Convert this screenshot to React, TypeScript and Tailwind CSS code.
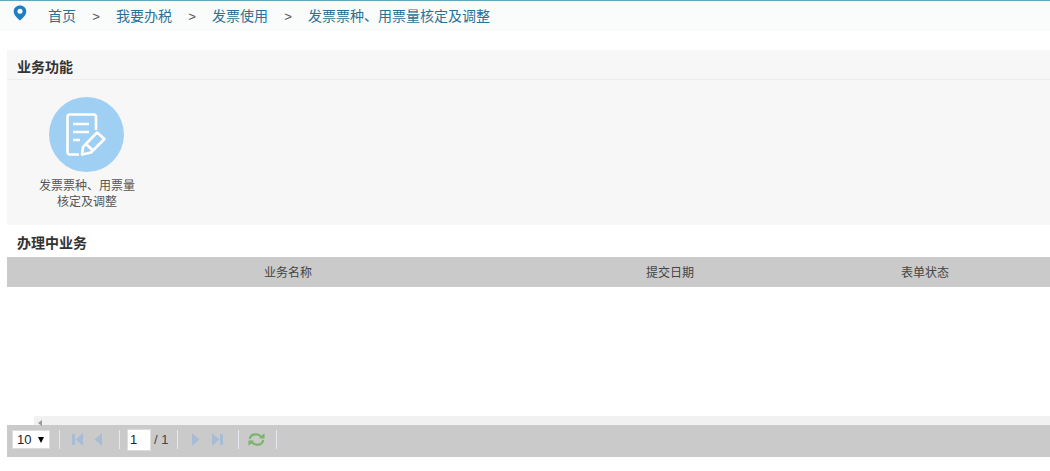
const FONT = "font-['Liberation_Sans','Noto_Sans_CJK_SC',sans-serif]"

const CRUMBS = ["首页", "我要办税", "发票使用", "发票票种、用票量核定及调整"]

// 分页栏的竖线
const Sep = () => <div className="w-px h-[19px] bg-[#e6eaf0] shrink-0" />

const PinIcon = () => (
  <svg width="14" height="16" viewBox="0 0 14 16" className="block">
    <path d="M7 0.5C3.4 0.5 0.7 3.1 0.7 6.4C0.7 10 4.6 13.4 7 15.5C9.4 13.4 13.3 10 13.3 6.4C13.3 3.1 10.6 0.5 7 0.5Z" fill="#1f7fc4" />
    <circle cx="7" cy="6.2" r="2.5" fill="#fff" />
  </svg>
)

const FormIcon = () => (
  <svg width="41" height="44" viewBox="0 0 41 44" fill="none" stroke="#fff" strokeWidth="2.6" strokeLinejoin="round">
    <path d="M13 41.500H3.500C2.500 41.500 1.500 40.500 1.500 39.500V3.500C1.500 2.500 2.500 1.500 3.500 1.500H28C29 1.500 30 2.500 30 3.500V17" />
    <path d="M7 11H23M7 19H23M7 27H14" />
    <path d="M16 41.500L17 34L31 19.500L38.500 26L25 39.500L16 41.500Z" />
    <path d="M20 31L27.500 38" />
  </svg>
)

const FirstIcon = () => (
  <svg width="11" height="13" viewBox="0 0 11 13">
    <rect x="0" y="1" width="3" height="11" fill="#a9bcd6" />
    <path d="M11 0V13L3.500 6.500Z" fill="#a9bcd6" />
  </svg>
)
const PrevIcon = () => (
  <svg width="8" height="13" viewBox="0 0 8 13"><path d="M8 0V13L0.500 6.500Z" fill="#a9bcd6" /></svg>
)
const NextIcon = () => (
  <svg width="8" height="13" viewBox="0 0 8 13"><path d="M0 0V13L7.500 6.500Z" fill="#a9bcd6" /></svg>
)
const LastIcon = () => (
  <svg width="11" height="13" viewBox="0 0 11 13">
    <path d="M0 0V13L7.500 6.500Z" fill="#a9bcd6" />
    <rect x="8" y="1" width="3" height="11" fill="#a9bcd6" />
  </svg>
)
const RefreshIcon = () => (
  <svg width="17" height="15" viewBox="0 0 17 15" fill="none" stroke="#79b568" strokeWidth="2.2" strokeLinecap="round">
    <path d="M2 6C3 3 6 2 9 2.500C11 2.800 12 3.500 13 4.500" />
    <path d="M15 9C14 12 11 13 8 12.500C6 12.200 5 11.500 4 10.500" />
    <path d="M11 6.500H16.500V1Z" fill="#79b568" stroke="none" />
    <path d="M6 8.500H0.500V14Z" fill="#79b568" stroke="none" />
  </svg>
)

export default function App() {
  return (
    <div className={`${FONT} w-[1050px] h-[471px] bg-white overflow-hidden`}>
      {/* 面包屑 */}
      <div className="h-[31px] bg-[#fafbfb] border-t border-t-[#5fa9bd] flex items-center pl-[13px] pt-[1px]">
        <div className="w-[35px] -mt-[8px]"><PinIcon /></div>
        {CRUMBS.map((c, i) => (
          <div key={c} className="flex items-center">
            {i > 0 && <span className="w-[40px] text-center text-[13px] text-[#555]">&gt;</span>}
            <span className="text-[14px] text-[#2a7295]">{c}</span>
          </div>
        ))}
      </div>

      {/* 业务功能 */}
      <div className="mt-[19px] ml-[7px] h-[175px] bg-[#f7f7f7]">
        <div className="h-[30px] border-b border-[#ececec] pl-[10px] pt-[7px] text-[14px] leading-[20px] font-bold text-[#333]">业务功能</div>
        <div className="w-[159px] flex flex-col items-center pt-[17px]">
          <div className="w-[75px] h-[75px] rounded-full bg-[#9fd0f3] flex items-center justify-center">
            <FormIcon />
          </div>
          <div className="mt-[6px] pl-[1px] text-[12px] leading-[16px] text-[#555] text-center">
            发票票种、用票量<br />核定及调整
          </div>
        </div>
      </div>

      {/* 办理中业务 */}
      <div className="ml-[7px] h-[32px] pl-[10px] pt-[8px] text-[14px] leading-[20px] font-bold text-[#333]">办理中业务</div>
      <div className="ml-[7px] h-[30px] bg-[#cacaca] text-[12px] text-[#444] flex items-center pt-[2px] overflow-hidden">
        <span className="w-[562px] shrink-0 text-center">业务名称</span>
        <span className="w-[202px] shrink-0 text-center">提交日期</span>
        <span className="w-[308px] shrink-0 text-center">表单状态</span>
      </div>

      {/* 表格内容区 */}
      <div className="h-[129px] bg-white" />
      <div className="ml-[34px] h-[9px] bg-[#f1f1f1] relative">
        <div className="absolute left-[4px] top-[4px] w-0 h-0 border-y-[3px] border-y-transparent border-r-[4px] border-r-[#999]" />
      </div>

      {/* 分页 */}
      <div className="ml-[7px] h-[32px] bg-[#cacaca] flex items-center pb-[3px] text-[13px] text-[#444]">
        <div className="ml-[5px] w-[38px] h-[19px] shrink-0 bg-white border border-[#ddd] flex items-center justify-between pl-[4px] pr-[5px] text-[#222] text-[13px]">
          <span>10</span>
          <span className="w-0 h-0 border-x-[3.500px] border-x-transparent border-t-[6px] border-t-black" />
        </div>
        <div className="ml-[9px]"><Sep /></div>
        <div className="ml-[12px] flex"><FirstIcon /></div>
        <div className="ml-[11px] flex"><PrevIcon /></div>
        <div className="ml-[17px]"><Sep /></div>
        <div className="ml-[7px] w-[24px] h-[22px] shrink-0 bg-white border border-[#ddd] pl-[2px] text-[13px] leading-[20px] text-[#222]">1</div>
        <span className="ml-[3px] w-[20px] shrink-0 text-[13px]">/ 1</span>
        <div className="ml-[3px]"><Sep /></div>
        <div className="ml-[14px] flex"><NextIcon /></div>
        <div className="ml-[12px] flex"><LastIcon /></div>
        <div className="ml-[15px]"><Sep /></div>
        <div className="ml-[9px] flex"><RefreshIcon /></div>
        <div className="ml-[11px]"><Sep /></div>
      </div>
    </div>
  )
}
